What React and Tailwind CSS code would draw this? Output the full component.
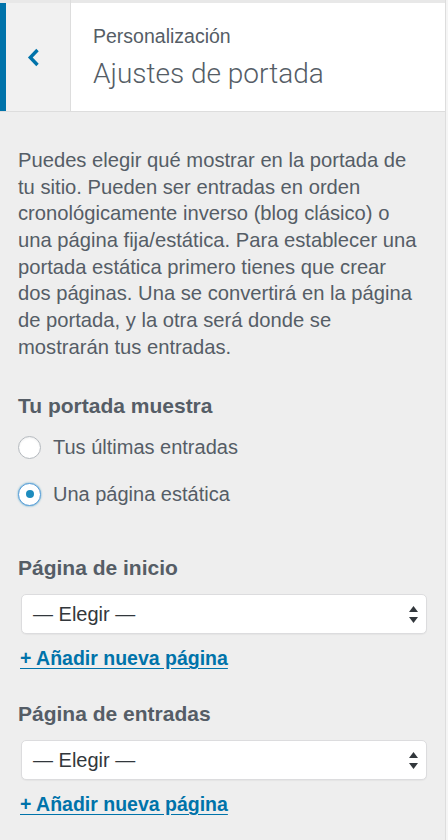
import { useState } from 'react';

const font = "font-['Liberation_Sans','Arial',sans-serif]";

const description = [
  'Puedes elegir qué mostrar en la portada de',
  'tu sitio. Pueden ser entradas en orden',
  'cronológicamente inverso (blog clásico) o',
  'una página fija/estática. Para establecer una',
  'portada estática primero tienes que crear',
  'dos páginas. Una se convertirá en la página',
  'de portada, y la otra será donde se',
  'mostrarán tus entradas.',
];

function BackChevron() {
  return (
    <svg width="13" height="19" viewBox="0 0 13 19" fill="none">
      <polyline points="10.5,2 3.3,9.5 10.5,17" stroke="#0073aa" strokeWidth="3.4" strokeLinejoin="miter" />
    </svg>
  );
}

function SelectArrows() {
  return (
    <svg width="9" height="17" viewBox="0 0 9 17">
      <path d="M4.5 0 L9 6 L0 6 Z" fill="#32373c" />
      <path d="M0 11 L9 11 L4.5 17 Z" fill="#32373c" />
    </svg>
  );
}

function Radio({ checked, label, onClick }) {
  return (
    <button type="button" onClick={onClick} className="flex items-center h-[24px] gap-[12px] text-left">
      <span
        className={`w-[23px] h-[23px] rounded-full bg-white flex items-center justify-center border ${
          checked
            ? 'border-[#5b9dd9] shadow-[0_0_2px_rgba(30,140,190,0.8)]'
            : 'border-[#b4b9be] shadow-[inset_0_1px_2px_rgba(0,0,0,0.07)]'
        }`}>
        {checked && <span className="w-[8px] h-[8px] rounded-full bg-[#1e8cbe]"></span>}
      </span>
      <span className="text-[20px] leading-[24px] text-[#555d66]">{label}</span>
    </button>
  );
}

function PageSelect({ title }) {
  return (
    <div>
      <h3 className="text-[21px] leading-[28px] font-bold text-[#555d66]">{title}</h3>
      <div className="mt-[12px] ml-[3px] h-[40px] bg-white border border-[#dcdcde] rounded-[5px] flex items-center justify-between pl-[11px] pr-[8px] shadow-[0_1px_1px_rgba(0,0,0,0.04)]">
        <span className="text-[20px] text-[#32373c]">— Elegir —</span>
        <SelectArrows />
      </div>
      <a href="#" className="block mt-[11px] ml-[2px] text-[19.5px] leading-[26.67px] font-bold text-[#0073aa] underline underline-offset-[3px]">
        + Añadir nueva página
      </a>
    </div>
  );
}

export default function App() {
  const [showOnFront, setShowOnFront] = useState('page');

  return (
    <div className={`w-[448px] h-[840px] bg-[#f5f5f5] flex overflow-hidden ${font}`}>
      <div className="w-[446px] h-full bg-[#eeeeee] border-r border-[#dddddd] flex flex-col">
        {/* header */}
        <div className="flex h-[112px] border-b border-[#dddddd]">
          <div className="w-[71px] flex flex-col border-r border-[#dddddd]">
            <div className="h-[3px] bg-[#e8e8e8]"></div>
            <div className="flex-1 flex">
              <div className="w-[6px] bg-[#0073aa]"></div>
              <div className="flex-1 bg-[#f1f1f1] flex items-center pl-[21px]">
                <BackChevron />
              </div>
            </div>
          </div>
          <div className="flex-1 flex flex-col">
            <div className="h-[3px] bg-[#e8e8e8]"></div>
            <div className="flex-1 bg-white pl-[22px] pt-[20px]">
              <div className="text-[19.5px] leading-[26px] text-[#555d66]">Personalización</div>
              <div className="mt-[7.5px] font-['Roboto',sans-serif] text-[28px] leading-[34px] font-light text-[#555d66]">Ajustes de portada</div>
            </div>
          </div>
        </div>

        {/* body */}
        <div className="px-[18px] pt-[35px]">
          <p className="text-[20.2px] leading-[26.67px] text-[#555d66] whitespace-nowrap">
            {description.map((line, i) => (
              <span key={i} className="block">{line}</span>
            ))}
          </p>

          <h3 className="mt-[32px] text-[21px] leading-[28px] font-bold text-[#555d66]">Tu portada muestra</h3>
          <div className="mt-[15px] flex flex-col gap-[23px]">
            <Radio label="Tus últimas entradas" checked={showOnFront === 'posts'} onClick={() => setShowOnFront('posts')} />
            <Radio label="Una página estática" checked={showOnFront === 'page'} onClick={() => setShowOnFront('page')} />
          </div>

          <div className="mt-[48px]">
            <PageSelect title="Página de inicio" />
          </div>
          <div className="mt-[28px]">
            <PageSelect title="Página de entradas" />
          </div>
        </div>
      </div>
    </div>
  );
}
